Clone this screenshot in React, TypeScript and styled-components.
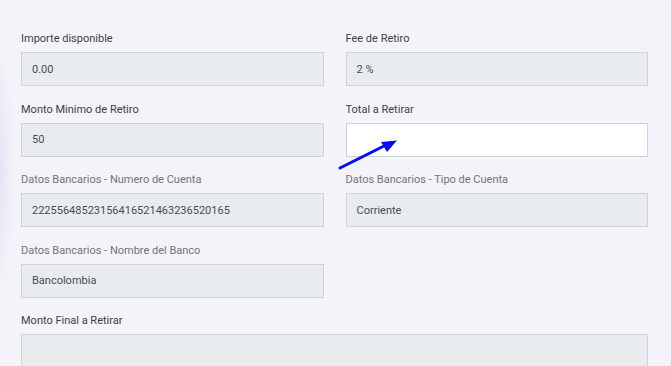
import * as React from 'react'
import styled, { createGlobalStyle } from 'styled-components'

const GlobalStyle = createGlobalStyle`
  html, body {
    margin: 0;
    padding: 0;
    background: #f3f3f9;
    font-family: Roboto, "Liberation Sans", Arial, sans-serif;
  }
`

const Page = styled.div`
  position: relative;
  width: 671px;
  height: 366px;
  overflow: hidden;
  box-sizing: border-box;
  padding: 31px 23px 0 21px;
  background:
    radial-gradient(ellipse 14px 120px at 0px 170px, rgba(120, 110, 200, 0.12), rgba(120, 110, 200, 0) 100%),
    #f3f3f9;
`

const Grid = styled.div`
  display: grid;
  grid-template-columns: 1fr 1fr;
  column-gap: 22px;
  row-gap: 15.5px;
`

const Field = styled.div<{ $wide?: boolean }>`
  display: flex;
  flex-direction: column;
  grid-column: ${({ $wide }) => ($wide ? '1 / span 2' : 'auto')};
`

const Label = styled.label<{ $muted?: boolean }>`
  font-size: 11px;
  line-height: 16px;
  height: 16px;
  margin-bottom: 5px;
  color: ${({ $muted }) => ($muted ? '#6f747c' : '#3c4148')};
`

const Input = styled.div<{ $editable?: boolean }>`
  box-sizing: border-box;
  height: 34px;
  padding: 0 10px;
  display: flex;
  align-items: center;
  font-size: 11px;
  color: #474c53;
  background: ${({ $editable }) => ($editable ? '#ffffff' : '#e9ecef')};
  border: 1px solid #ced4da;
`

const Arrow = styled.svg`
  position: absolute;
  left: 336px;
  top: 136px;
  pointer-events: none;
`

type FieldData = { label: string; value: string; muted?: boolean; editable?: boolean; wide?: boolean }

const fields: (FieldData | null)[] = [
  { label: 'Importe disponible', value: '0.00' },
  { label: 'Fee de Retiro', value: '2 %' },
  { label: 'Monto Minimo de Retiro', value: '50' },
  { label: 'Total a Retirar', value: '', editable: true },
  { label: 'Datos Bancarios - Numero de Cuenta', value: '22255648523156416521463236520165', muted: true },
  { label: 'Datos Bancarios - Tipo de Cuenta', value: 'Corriente', muted: true },
  { label: 'Datos Bancarios - Nombre del Banco', value: 'Bancolombia', muted: true },
  null,
  { label: 'Monto Final a Retirar', value: '', wide: true },
]

export default function App() {
  return (
    <>
      <GlobalStyle />
      <Page>
        <Grid>
          {fields.map((f, i) =>
            f ? (
              <Field key={i} $wide={f.wide}>
                <Label $muted={f.muted}>{f.label}</Label>
                <Input $editable={f.editable}>{f.value}</Input>
              </Field>
            ) : (
              <div key={i} />
            )
          )}
        </Grid>
        <Arrow width="66" height="38" viewBox="0 0 66 38">
          <line x1="4" y1="32" x2="50" y2="9" stroke="#0a0af0" strokeWidth="3" strokeLinecap="round" />
          <polygon points="61,4.5 45,6 51,16" fill="#0a0af0" />
        </Arrow>
      </Page>
    </>
  )
}
